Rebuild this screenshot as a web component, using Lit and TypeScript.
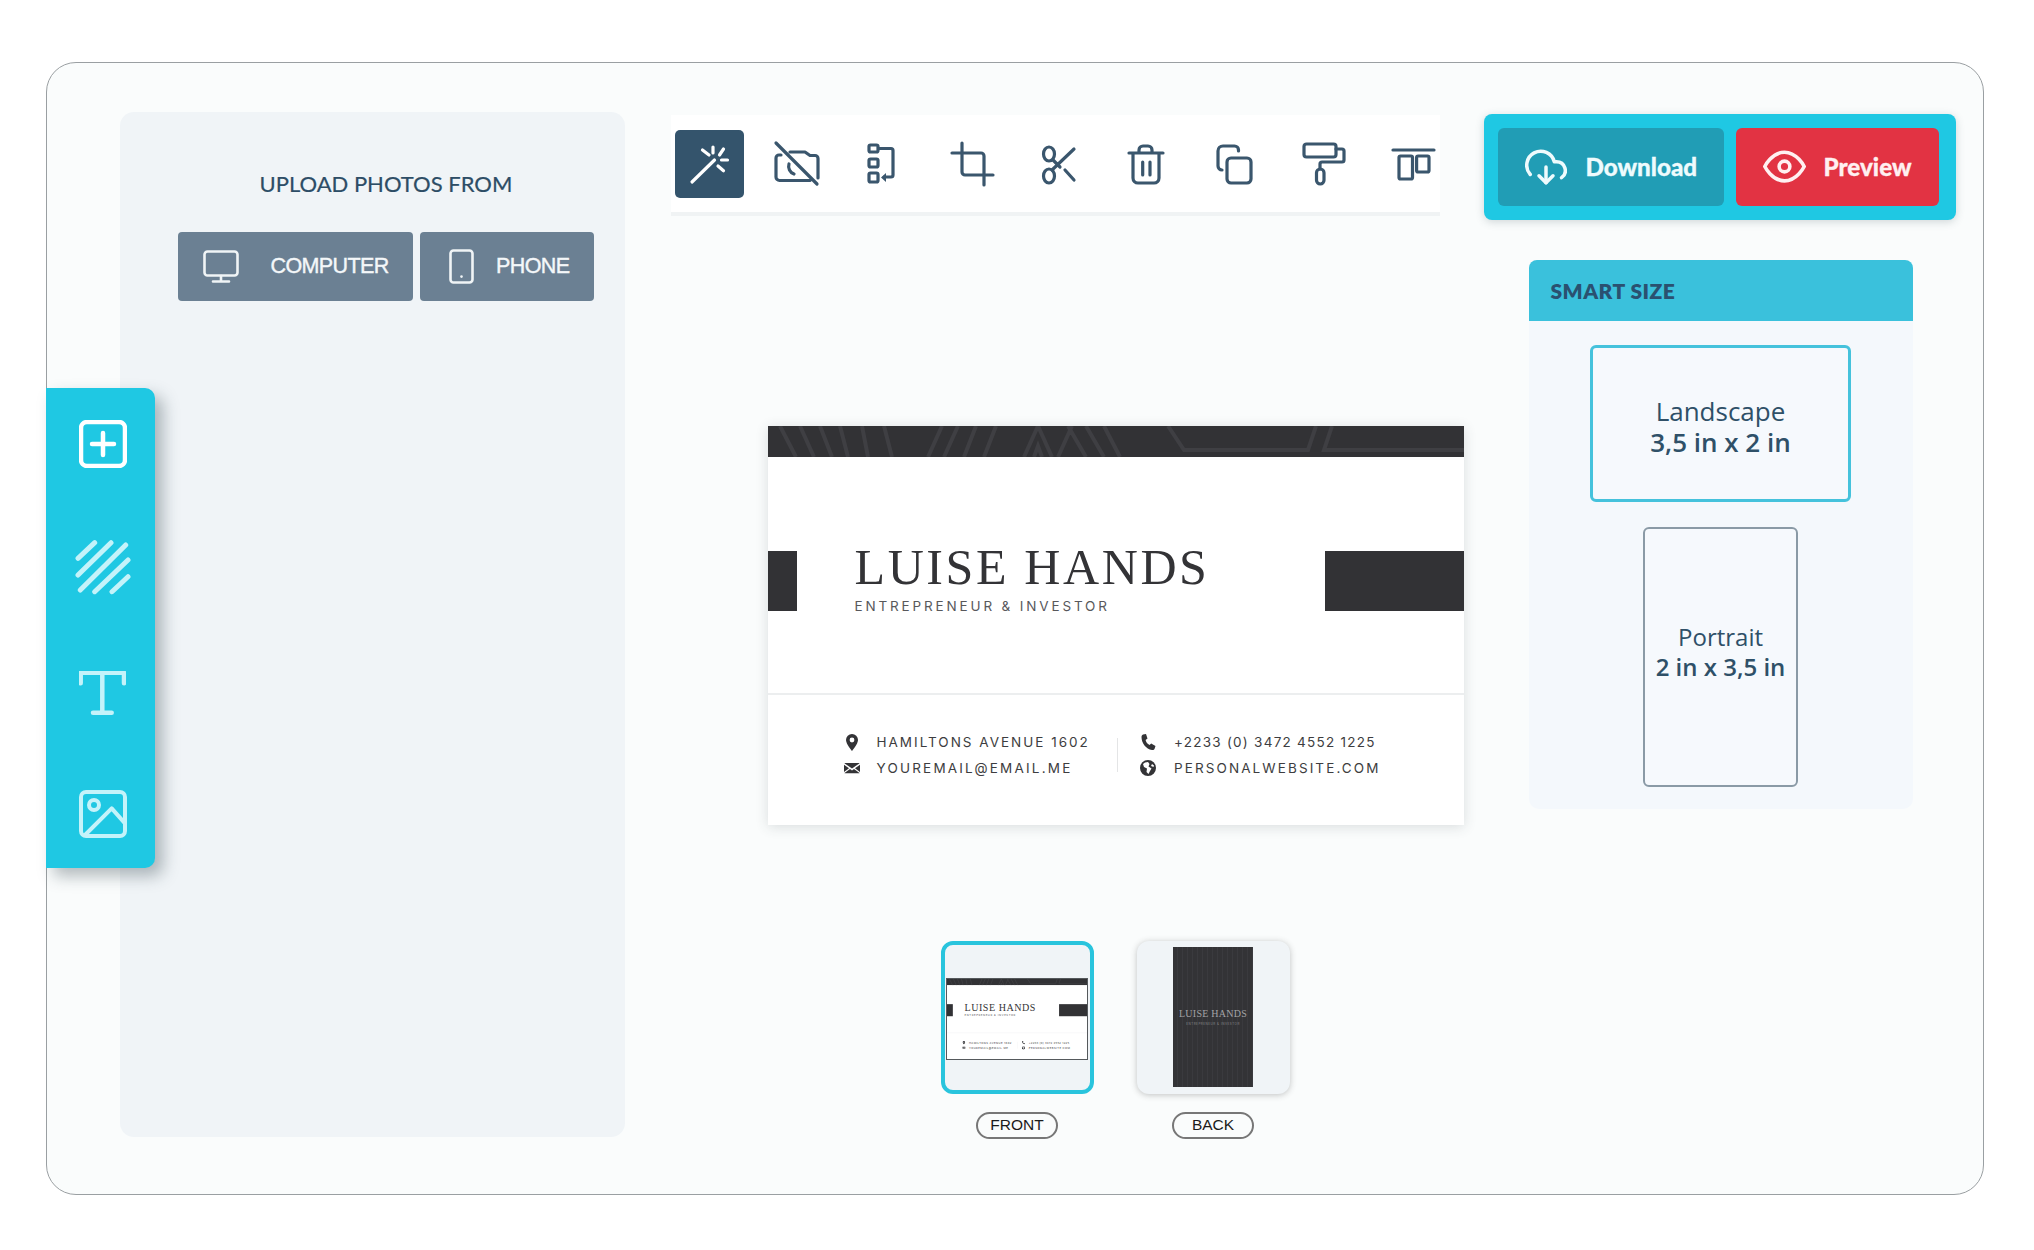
import { LitElement, html, css } from "lit";
import { customElement } from "lit/decorators.js";

const toolIcons = [
  html`<svg class="ti" viewBox="0 0 44 44"><path d="M5 40L27.5 18M15.5 8L22 13M26 5V11M36.5 7L32.5 13M34.5 18H40.5M31 24L36.5 28.7"/></svg>`,
  html`<svg class="ti" viewBox="0 0 44 44"><path d="M6 13H4a3 3 0 0 0-3 3V35a3.5 3.5 0 0 0 3.5 3.5H35M15 10H30L35 13.5H40a3 3 0 0 1 3 3V36M1 1L42 42M14 22a8 8 0 0 0 5 10"/></svg>`,
  html`<svg class="ti" viewBox="0 0 44 44"><rect x="9" y="3" width="9" height="7" rx="1.5"/><rect x="9" y="17" width="9" height="8" rx="1.5"/><rect x="9" y="31" width="9" height="9" rx="1.5"/><path d="M19 6.5H31a2 2 0 0 1 2 2V33a2 2 0 0 1-2 2H24"/><path class="fill" d="M26 31L21 35.5L26 40Z"/></svg>`,
  html`<svg class="ti" viewBox="0 0 44 44"><path d="M12 1V30a3 3 0 0 0 3 3H43M2 11H31a3 3 0 0 1 3 3V43"/></svg>`,
  html`<svg class="ti" viewBox="0 0 44 44"><ellipse cx="12" cy="12" rx="5.5" ry="7"/><ellipse cx="12" cy="34" rx="5.5" ry="7"/><path d="M15 28L37 7M16 18L23 25M28 28L37 38"/></svg>`,
  html`<svg class="ti" viewBox="0 0 44 44"><path d="M5 11H39M15 11V8a4 4 0 0 1 4-4H24a4 4 0 0 1 4 4V11M9 11V36a5 5 0 0 0 5 5H30a5 5 0 0 0 5-5V11M18.7 20V33M26 20V33"/></svg>`,
  html`<svg class="ti" viewBox="0 0 44 44"><rect x="16" y="16" width="24" height="25" rx="4"/><path d="M27.5 9V8a4 4 0 0 0-4-4H12a5 5 0 0 0-5 5V24a4 4 0 0 0 4 4"/></svg>`,
  html`<svg class="ti" viewBox="0 0 44 44"><rect x="3" y="2" width="32" height="13" rx="2.5"/><path d="M35 7H41a2 2 0 0 1 2 2V18a2 2 0 0 1-2 2H21a2 2 0 0 0-2 2V27"/><rect x="15.5" y="27" width="7.5" height="15" rx="3.7"/></svg>`,
  html`<svg class="ti" viewBox="0 0 44 44"><path d="M2 8H43"/><rect x="8" y="14" width="13.5" height="23" rx="1.5"/><rect x="25.6" y="14" width="12.4" height="16" rx="1.5"/></svg>`,
];

const pin = html`<svg class="ci" viewBox="0 0 20 20"><path d="M10 2a6 6 0 0 0-6 6c0 4 6 11 6 11s6-7 6-11a6 6 0 0 0-6-6zm0 3.6a2.4 2.4 0 1 1 0 4.8a2.4 2.4 0 0 1 0-4.8z" fill-rule="evenodd"/></svg>`;
const mail = html`<svg class="ci" viewBox="0 0 20 20"><path d="M3 5H17a1 1 0 0 1 .6.3L10 10.6L2.400 5.300A1 1 0 0 1 3 5zM2 6.800L7 10.300L2 14zM18 6.800V14L13 10.300zM8 11L10 12.400L12 11L17.500 15a1 1 0 0 1-.5.2H3a1 1 0 0 1-.5-.2z"/></svg>`;
const phone = html`<svg class="ci" viewBox="0 0 20 20"><path d="M5 2.500L8 2L9.500 6.500L7.600 8C8 10 9.500 12 11.500 13L13.200 11.500L17.500 14L16.500 17C16 18 15 18 14 18C8 17 3.500 11 3.500 5C3.500 4 4 3 5 2.500Z"/></svg>`;
const globe = html`<svg class="ci" viewBox="0 0 20 20"><path fill-rule="evenodd" d="M10 2a8 8 0 1 1 0 16a8 8 0 0 1 0-16zM7 4.500L5 6L6 9L9 10.500L8.500 14L10.500 16L12 13L13.500 10.500L10.500 8.500L11.500 6L10 4zM14 6L13 8L15.500 9L16 7.500z"/></svg>`;

const bizCard = html`
  <div class="biz">
    <svg class="band" viewBox="0 0 696 31" preserveAspectRatio="none">
      <rect width="696" height="31" fill="#323235"/>
      <path d="M12 0L28 31M32 0L46 31M52 0L64 31M72 0L80 31M94 0L100 31M116 0L124 31M160 31L174 0M176 31L190 0M196 31L208 0M216 31L228 0M256 31L270 0L284 31M266 31L270 20L274 31M290 31L304 0M300 0L318 31M318 0L336 31M336 0L352 31M400 0L416 24H540L548 0M564 0L556 24H696" fill="none" stroke="#3f3f43" stroke-width="4"/>
    </svg>
    <div class="bizmain">
      <div class="blockl"></div>
      <div class="identity">
        <div class="name">LUISE HANDS</div>
        <div class="role">ENTREPRENEUR &amp; INVESTOR</div>
      </div>
      <div class="blockr"></div>
    </div>
    <div class="bizfoot">
      <div class="ccol first">
        <div class="crow"><span class="cicon">${pin}</span><span class="a1">HAMILTONS AVENUE 1602</span></div>
        <div class="crow"><span class="cicon">${mail}</span><span class="a2">YOUREMAIL@EMAIL.ME</span></div>
      </div>
      <div class="cdiv"></div>
      <div class="ccol second">
        <div class="crow"><span class="cicon">${phone}</span><span class="a3">+2233 (0) 3472 4552 1225</span></div>
        <div class="crow"><span class="cicon">${globe}</span><span class="a4">PERSONALWEBSITE.COM</span></div>
      </div>
    </div>
  </div>`;

@customElement("app-root")
export class AppRoot extends LitElement {
  static styles = css`
    :host { display: block; width: 2034px; height: 1250px; background: #fff; overflow: hidden; }
    * { box-sizing: border-box; }
    .frame {
      position: relative; margin: 62px 0 0 46px; width: 1938px; height: 1133px;
      border: 1.5px solid #9a9fa2; border-radius: 30px; background: #fafcfc;
      display: flex; padding: 50.5px 0 0 72.5px;
    }
    .rail {
      position: absolute; left: -1.5px; top: 324.5px; width: 109px; height: 480px;
      background: #1fc8e3; border-radius: 0 10px 10px 0;
      box-shadow: 8px 8px 16px rgba(40, 60, 70, .35);
      display: flex; flex-direction: column; align-items: center; gap: 75px; padding: 32px 0 0 5px;
    }
    .rail svg { display: block; fill: none; stroke-linecap: round; stroke-linejoin: round; }
    .rail .s1 { width: 48px; height: 48px; stroke: #fff; stroke-width: 4.500px; }
    .rail .s2 { width: 56px; height: 56px; margin: -3px 0 -5px; stroke: #c4f3fa; stroke-width: 5px; }
    .rail .s3 { width: 47px; height: 45px; margin: 5.500px 0 -2.500px; stroke: #c4f3fa; stroke-width: 4.500px; }
    .rail .s4 { width: 48px; height: 48px; margin-top: 1px; stroke: #c4f3fa; stroke-width: 4px; }

    .panel {
      flex: 0 0 505px; height: 1025px; margin-top: -2px; background: #f0f4f7; border-radius: 14px;
      padding: 58px 0 0 58px;
    }
    .ptitle {
      font: 400 22px/28px Lato, sans-serif; color: #2d4d66; -webkit-text-stroke: .2px #2d4d66;
      margin: 0 0 34px 82px; white-space: nowrap;
    }
    .srcs { display: flex; gap: 7.500px; }
    .src {
      height: 69px; background: #6b8093; border-radius: 4px; display: flex; align-items: center;
      font: 400 21.500px "Liberation Sans", sans-serif; letter-spacing: -.6px; color: #f4f7f9;
      -webkit-text-stroke: .4px #f4f7f9;
    }
    .src svg { display: block; fill: none; stroke: #f0f4f6; stroke-width: 2.600px; stroke-linecap: round; stroke-linejoin: round; }
    .src.c { width: 235px; padding-left: 25px; gap: 32px; }
    .src.c svg { width: 36px; height: 33px; }
    .src.p { width: 174px; padding-left: 29px; gap: 22px; }
    .src.p svg { width: 25px; height: 35px; }

    .mid { flex: 0 0 799px; margin-left: 46px; padding-top: 1px; }
    .toolbar {
      width: 769px; height: 101px; background: #fff; border-bottom: 4px solid #f0f3f4;
      display: flex; align-items: flex-start; gap: 32px; padding: 15px 0 0 4px;
    }
    .tool { flex: 0 0 56px; height: 68px; display: flex; align-items: center; justify-content: center; }
    .tool.on { flex: 0 0 69px; background: #34546c; border-radius: 5px; margin-right: -7px; }
    .ti { width: 44px; height: 44px; display: block; fill: none; stroke: #3a566d; stroke-width: 3.200px; stroke-linecap: round; stroke-linejoin: round; overflow: visible; }
    .ti .fill { fill: #3a566d; stroke: none; }
    .tool.on .ti { stroke: #fff; }
    .tool:nth-child(3) { transform: translateX(-3px); }
    .tool:nth-child(4) { transform: translateX(-1px); }
    .tool:nth-child(5) { transform: translateX(-2px); }
    .tool:nth-child(6) { transform: translateX(-3px); }
    .tool:nth-child(7) { transform: translateX(-4px); }
    .tool:nth-child(8) { transform: translateX(-2px); }
    .tool:nth-child(9) { transform: translateX(0); }

    .cardwrap { margin: 210px 0 0 97px; width: 696px; height: 399px; box-shadow: 0 2px 12px rgba(50, 60, 70, .16); }
    .biz { width: 696px; height: 399px; background: #fff; display: flex; flex-direction: column; }
    .band { width: 696px; height: 31px; display: block; flex: none; }
    .bizmain { height: 236px; flex: none; display: flex; align-items: flex-start; padding-top: 94px; }
    .blockl { width: 29px; height: 60px; background: #323235; flex: none; }
    .blockr { width: 139px; height: 60px; background: #323235; flex: none; margin-left: auto; }
    .identity { margin-left: 58px; margin-top: -9px; }
    .name { font: 400 50px/50px "Liberation Serif", serif; letter-spacing: 2.600px; color: #333336; white-space: nowrap; }
    .role { font: 400 13.500px/16px Inter, sans-serif; letter-spacing: 2.850px; color: #58585b; margin-top: 6px; white-space: nowrap; }
    .bizfoot { flex: 1; border-top: 2px solid #eceeef; display: flex; align-items: flex-start; padding: 34px 0 0 74px; }
    .ccol { display: flex; flex-direction: column; }
    .first { width: 275px; }
    .cdiv { width: 1px; height: 34px; background: #e4e5e6; margin: 9px 20px 0 0; }
    .crow { height: 26px; display: flex; align-items: center; gap: 15px; font: 400 13.500px/26px Inter, sans-serif; color: #3d3d40; white-space: nowrap; }
    .second .crow { gap: 16.500px; }
    .cicon { width: 20px; height: 20px; display: block; flex: none; }
    .ci { width: 20px; height: 20px; display: block; fill: #333336; }
    .a1 { letter-spacing: 2px; }
    .a2 { letter-spacing: 2.200px; }
    .a3 { letter-spacing: 1.250px; }
    .a4 { letter-spacing: 2.100px; }

    .thumbs { display: flex; gap: 43px; margin: 116px 0 0 270px; }
    .tcol { display: flex; flex-direction: column; align-items: center; gap: 18px; }
    .thumb { width: 153px; height: 153px; border-radius: 12px; background: #f0f4f7; display: flex; align-items: center; justify-content: center; padding-top: 4px; }
    .thumb.sel { border: 4px solid #29c4dd; }
    .thumb.other { box-shadow: 0 1px 6px rgba(60, 60, 60, .3); padding-top: 0; }
    .mini { width: 140px; height: 80px; outline: 1px solid #55595c; overflow: hidden; flex: none; }
    .mini .inner { width: 696px; height: 399px; transform: scale(.2012); transform-origin: 0 0; }
    .mback {
      width: 80px; height: 140px; background-color: #333336; display: flex; flex-direction: column; align-items: center; justify-content: center; gap: 2px;
      background-image: repeating-linear-gradient(90deg, transparent 0 4px, #3a3a3e 4px 5px);
    }
    .mname { font: 400 10px/12px "Liberation Serif", serif; letter-spacing: .25px; color: #a3a3a6; white-space: nowrap; }
    .mrole { font: 400 3px/4px Inter, sans-serif; letter-spacing: .5px; color: #88888b; white-space: nowrap; }
    .pill {
      width: 82px; height: 27px; border: 2px solid #777; border-radius: 14px;
      display: flex; align-items: center; justify-content: center;
      font: 400 15.500px "Liberation Sans", sans-serif; color: #1b1b1b;
    }

    .right { flex: 0 0 472px; margin-left: 14px; }
    .actions {
      width: 472px; height: 106px; background: #1fc8e3; border-radius: 8px; padding: 14px; display: flex; gap: 12px;
      box-shadow: 0 2px 8px rgba(60, 80, 90, .22);
    }
    .act {
      height: 78px; border-radius: 6px; display: flex; align-items: center; padding-left: 27px;
      font: 900 24.200px Lato, sans-serif; color: #eefbfd; -webkit-text-stroke: .3px currentColor;
    }
    .act svg { display: block; fill: none; stroke: currentColor; stroke-width: 2px; stroke-linecap: round; stroke-linejoin: round; }
    .act.d { width: 226px; background: #219db5; gap: 19px; }
    .act.d svg { width: 42px; height: 42px; }
    .act.v { width: 203px; background: #e23343; gap: 18px; color: #fff0f1; }
    .act.v svg { width: 43px; height: 43px; }

    .smart { margin: 40px 0 0 45px; width: 384px; }
    .shead {
      height: 61px; background: #3ac1dc; border-radius: 8px 8px 0 0; padding-left: 22px; display: flex; align-items: center;
      font: 800 21px Lato, sans-serif; letter-spacing: .45px; color: #2a5170;
    }
    .sbody {
      height: 488px; background: #f4f8fc; border-radius: 0 0 10px 10px; padding-top: 24px;
      display: flex; flex-direction: column; align-items: center; gap: 25px;
      font-family: "Open Sans", sans-serif; color: #2f5068; text-align: center;
    }
    .opt { display: flex; flex-direction: column; align-items: center; justify-content: center; border-radius: 6px; background: #f6f9fd; }
    .opt b { font-weight: 600; }
    .opt.l { width: 261px; height: 157px; border: 3px solid #45c2dc; font-size: 26px; line-height: 31px; padding-top: 7px; }
    .opt.pt { width: 155px; height: 260px; border: 2px solid #8a9aa6; font-size: 24px; line-height: 30px; padding-bottom: 10px; white-space: nowrap; }
  `;

  render() {
    return html`
      <div class="frame">
        <div class="panel">
          <div class="ptitle">UPLOAD PHOTOS FROM</div>
          <div class="srcs">
            <div class="src c">
              <svg viewBox="0 0 36 33"><rect x="1.500" y="1.500" width="33" height="24" rx="3"/><path d="M18 26V31M10 31.500H26"/></svg>
              COMPUTER
            </div>
            <div class="src p">
              <svg viewBox="0 0 25 35"><rect x="1.500" y="1.500" width="22" height="32" rx="3"/><path d="M12.500 27.500V27.600"/></svg>
              PHONE
            </div>
          </div>
        </div>

        <div class="mid">
          <div class="toolbar">
            ${toolIcons.map((ic, i) => html`<div class="tool ${i === 0 ? "on" : ""}">${ic}</div>`)}
          </div>
          <div class="cardwrap">${bizCard}</div>
          <div class="thumbs">
            <div class="tcol">
              <div class="thumb sel"><div class="mini"><div class="inner">${bizCard}</div></div></div>
              <div class="pill">FRONT</div>
            </div>
            <div class="tcol">
              <div class="thumb other">
                <div class="mback">
                  <div class="mname">LUISE HANDS</div>
                  <div class="mrole">ENTREPRENEUR &amp; INVESTOR</div>
                </div>
              </div>
              <div class="pill">BACK</div>
            </div>
          </div>
        </div>

        <div class="right">
          <div class="actions">
            <div class="act d">
              <svg viewBox="0 0 24 24"><polyline points="8 17 12 21 16 17"/><line x1="12" y1="12" x2="12" y2="21"/><path d="M20.880 18.090A5 5 0 0 0 18 9h-1.260A8 8 0 1 0 3 16.290"/></svg>
              Download
            </div>
            <div class="act v">
              <svg viewBox="0 0 24 24"><path d="M1 12s4-8 11-8 11 8 11 8-4 8-11 8-11-8-11-8z"/><circle cx="12" cy="12" r="3"/></svg>
              Preview
            </div>
          </div>
          <div class="smart">
            <div class="shead">SMART SIZE</div>
            <div class="sbody">
              <div class="opt l"><span>Landscape</span><b>3,5 in x 2 in</b></div>
              <div class="opt pt"><span>Portrait</span><b>2 in x 3,5 in</b></div>
            </div>
          </div>
        </div>

        <div class="rail">
          <svg class="s1" viewBox="0 0 48 48"><rect x="2" y="2" width="44" height="44" rx="6"/><path d="M24 13V35M13 24H35"/></svg>
          <svg class="s2" viewBox="0 0 56 56"><path d="M3 18.300L19.700 2.700M3 35L36 2.700M5.300 50L50.700 5M19.700 51.700L53 20M37 51.700L53 36.700"/></svg>
          <svg class="s3" viewBox="0 0 47 45"><path d="M1.700 12.300V1.700H45V12.300M23.300 1.700V41.700M14 41.700H32.700"/></svg>
          <svg class="s4" viewBox="0 0 48 48"><rect x="2" y="2" width="44" height="44" rx="5"/><circle cx="15" cy="15" r="5"/><path d="M6 45L32.700 18.300L46 33.300"/></svg>
        </div>
      </div>
    `;
  }
}
